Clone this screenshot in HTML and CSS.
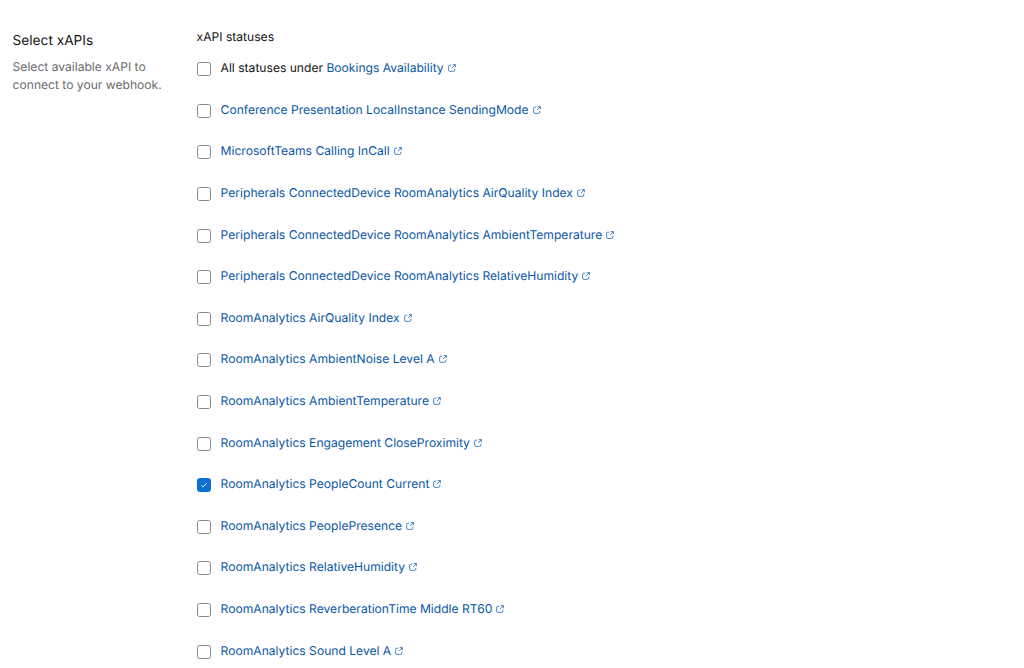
FILE: index.html
```html
<!DOCTYPE html>
<html lang="en">
<head>
  <meta charset="UTF-8" />
  <title>Select xAPIs</title>
  <link rel="stylesheet" href="styles.css">
</head>
<body>
  <svg class="defs" width="0" height="0">
    <symbol id="ext" viewBox="0 0 10 10">
      <path d="M4 1.5H2.2A1.4 1.4 0 0 0 .8 2.9v4.7A1.6 1.6 0 0 0 2.4 9.2h4.7a1.4 1.4 0 0 0 1.4-1.4V6" fill="none" stroke="currentColor" stroke-width=".9"/>
      <path d="M5.8 .8h3.4v3.4M9.2 .8 5 5" fill="none" stroke="currentColor" stroke-width=".9"/>
    </symbol>
  </svg>

  <div class="page">
    <div class="side">
      <h2>Select xAPIs</h2>
      <p>Select available xAPI to connect to your webhook.</p>
    </div>

    <div class="main">
      <h3>xAPI statuses</h3>
      <ul class="list">
        <li><span class="box"></span><span class="label">All statuses under <a href="#">Bookings Availability</a><svg class="ext"><use href="#ext"/></svg></span></li>
        <li><span class="box"></span><span class="label"><a href="#">Conference Presentation LocalInstance SendingMode</a><svg class="ext"><use href="#ext"/></svg></span></li>
        <li><span class="box"></span><span class="label"><a href="#">MicrosoftTeams Calling InCall</a><svg class="ext"><use href="#ext"/></svg></span></li>
        <li><span class="box"></span><span class="label"><a href="#">Peripherals ConnectedDevice RoomAnalytics AirQuality Index</a><svg class="ext"><use href="#ext"/></svg></span></li>
        <li><span class="box"></span><span class="label"><a href="#">Peripherals ConnectedDevice RoomAnalytics AmbientTemperature</a><svg class="ext"><use href="#ext"/></svg></span></li>
        <li><span class="box"></span><span class="label"><a href="#">Peripherals ConnectedDevice RoomAnalytics RelativeHumidity</a><svg class="ext"><use href="#ext"/></svg></span></li>
        <li><span class="box"></span><span class="label"><a href="#">RoomAnalytics AirQuality Index</a><svg class="ext"><use href="#ext"/></svg></span></li>
        <li><span class="box"></span><span class="label"><a href="#">RoomAnalytics AmbientNoise Level A</a><svg class="ext"><use href="#ext"/></svg></span></li>
        <li><span class="box"></span><span class="label"><a href="#">RoomAnalytics AmbientTemperature</a><svg class="ext"><use href="#ext"/></svg></span></li>
        <li><span class="box"></span><span class="label"><a href="#">RoomAnalytics Engagement CloseProximity</a><svg class="ext"><use href="#ext"/></svg></span></li>
        <li><span class="box checked"><svg viewBox="0 0 14 14"><path d="M4 7.4 6 9.3 10 5" fill="none" stroke="#fff" stroke-width="1"/></svg></span><span class="label"><a href="#">RoomAnalytics PeopleCount Current</a><svg class="ext"><use href="#ext"/></svg></span></li>
        <li><span class="box"></span><span class="label"><a href="#">RoomAnalytics PeoplePresence</a><svg class="ext"><use href="#ext"/></svg></span></li>
        <li><span class="box"></span><span class="label"><a href="#">RoomAnalytics RelativeHumidity</a><svg class="ext"><use href="#ext"/></svg></span></li>
        <li><span class="box"></span><span class="label"><a href="#">RoomAnalytics ReverberationTime Middle RT60</a><svg class="ext"><use href="#ext"/></svg></span></li>
        <li><span class="box"></span><span class="label"><a href="#">RoomAnalytics Sound Level A</a><svg class="ext"><use href="#ext"/></svg></span></li>
      </ul>
    </div>
  </div>
</body>
</html>
```
FILE: styles.css
```css
html, body {
  margin: 0;
  padding: 0;
  height: 100%;
  overflow: hidden;
  background: #fff;
  font-family: Inter, "Liberation Sans", sans-serif;
  color: #141414;
  text-rendering: geometricPrecision;
}

.defs {
  position: absolute;
}

.page {
  display: flex;
  padding: 28px 0 0 12.6px;
}

.side {
  width: 184px;
  flex: none;
}

.side h2 {
  margin: 0;
  padding-top: 3px;
  font-size: 13.66px;
  line-height: 20px;
  font-weight: 400;
}

.side p {
  margin: 7px 0 0;
  width: 152px;
  font-size: 12.1px;
  line-height: 18px;
  color: #6b6b6b;
}

.main h3 {
  margin: 0 0 13.2px;
  font-size: 12.1px;
  line-height: 18px;
  font-weight: 400;
}

.list {
  list-style: none;
  margin: 0;
  padding: 0;
}

.list li {
  display: flex;
  align-items: flex-start;
  height: 41.6px;
}

.box {
  box-sizing: border-box;
  flex: none;
  width: 14px;
  height: 14px;
  margin-top: 3px;
  margin-right: 10px;
  border: 1px solid #8a8a8a;
  border-radius: 2.5px;
  background: #fff;
}

.box.checked {
  border-color: #1170cf;
  background: #1170cf;
}

.box.checked svg {
  display: block;
  width: 12px;
  height: 12px;
}

.label {
  font-size: 12.1px;
  line-height: 18px;
}

.label a {
  color: #0a56a6;
  text-decoration: none;
}

.ext {
  width: 8px;
  height: 8px;
  margin-left: 4px;
  color: #0a56a6;
}
```
